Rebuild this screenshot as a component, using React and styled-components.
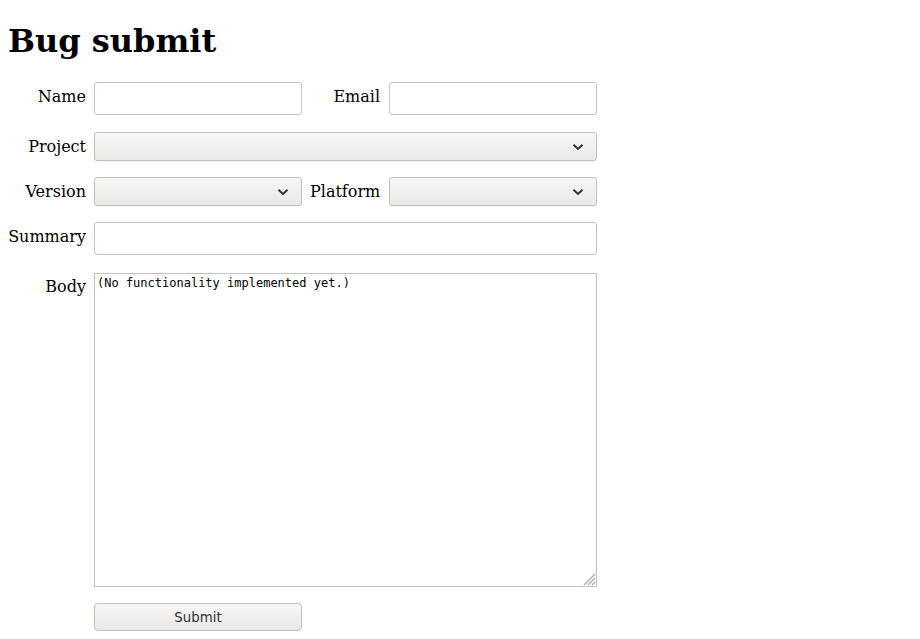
import React from 'react';
import styled, { createGlobalStyle } from 'styled-components';

const GlobalStyle = createGlobalStyle`
  html, body {
    margin: 0;
    background: #fff;
  }
  body {
    font-family: "DejaVu Serif", serif;
    color: #000;
  }
`;

const Page = styled.div`
  padding: 22px 8px 8px;
`;

const Title = styled.h1`
  margin: 0 0 22px;
  font-family: "DejaVu Serif", serif;
  font-size: 32px;
  font-weight: bold;
  line-height: 38px;
`;

const Form = styled.form`
  display: flex;
  flex-direction: column;
  width: 589px;
`;

const Row = styled.div`
  display: grid;
  grid-template-columns: ${(p) => (p.$split ? '78px 208px 71px 208px' : '78px 503px')};
  column-gap: 8px;
  align-items: center;
  margin-top: ${(p) => p.$top || 0}px;

  & > :nth-child(3) {
    padding-right: 1px;
  }
`;

const Label = styled.label`
  font-family: "DejaVu Serif", serif;
  font-size: 16px;
  text-align: right;
  white-space: nowrap;
  align-self: ${(p) => (p.$top ? 'start' : 'center')};
  padding-top: ${(p) => (p.$top ? 4 : 0)}px;
  margin-top: ${(p) => (p.$raise ? -4 : 0)}px;
`;

const TextInput = styled.input`
  box-sizing: border-box;
  height: 33px;
  width: 100%;
  margin: 0;
  padding: 4px 8px;
  border: 1px solid #c6c2bc;
  border-radius: 3px;
  background: #fff;
  font-family: "DejaVu Sans", sans-serif;
  font-size: 13px;
  outline: none;
`;

const SelectBox = styled.div`
  position: relative;
  box-sizing: border-box;
  height: 29px;
  border: 1px solid #c3bfb9;
  border-radius: 3px;
  background: linear-gradient(#f7f6f5, #ebe9e7);
  box-shadow: 0 1px 0 rgba(0, 0, 0, 0.04);

  svg {
    position: absolute;
    right: 12px;
    top: 10px;
  }
`;

const Select = ({ label }) => (
  <SelectBox aria-label={label} role="combobox">
    <svg width="12" height="8" viewBox="0 0 12 8">
      <path d="M1.5 1.8 L6 6 L10.5 1.8" fill="none" stroke="#2e3436" strokeWidth="2" />
    </svg>
  </SelectBox>
);

const AreaWrap = styled.div`
  position: relative;
  height: 314px;

  svg {
    position: absolute;
    right: 1px;
    bottom: 1px;
    pointer-events: none;
  }
`;

const TextArea = styled.textarea`
  box-sizing: border-box;
  display: block;
  height: 314px;
  width: 100%;
  margin: 0;
  padding: 2px;
  border: 1px solid #c0c0bc;
  border-radius: 0;
  background: #fff;
  font-family: "DejaVu Sans Mono", monospace;
  font-size: 12px;
  line-height: 14px;
  color: #000;
  resize: none;
  outline: none;
`;

const Button = styled.button`
  box-sizing: border-box;
  width: 208px;
  height: 28px;
  margin: 0;
  border: 1px solid #c3bfb9;
  border-radius: 4px;
  background: linear-gradient(#f7f6f5, #ebe9e7);
  font-family: "DejaVu Sans", sans-serif;
  font-size: 13.33px;
  color: #2e3436;
  cursor: pointer;
`;

export default function App() {
  return (
    <>
      <GlobalStyle />
      <Page>
        <Title>Bug submit</Title>
        <Form onSubmit={(e) => e.preventDefault()}>
          <Row $split>
            <Label $raise>Name</Label>
            <TextInput type="text" />
            <Label $raise>Email</Label>
            <TextInput type="email" />
          </Row>
          <Row $top={17}>
            <Label>Project</Label>
            <Select label="Project" />
          </Row>
          <Row $split $top={16}>
            <Label>Version</Label>
            <Select label="Version" />
            <Label>Platform</Label>
            <Select label="Platform" />
          </Row>
          <Row $top={16}>
            <Label $raise>Summary</Label>
            <TextInput type="text" />
          </Row>
          <Row $top={18}>
            <Label $top>Body</Label>
            <AreaWrap>
              <TextArea defaultValue="(No functionality implemented yet.)" />
              <svg width="14" height="14" viewBox="0 0 14 14">
                <path d="M13 2 L2 13 M13 6 L6 13 M13 10 L10 13" stroke="#a8a8a4" strokeWidth="1.2" />
              </svg>
            </AreaWrap>
          </Row>
          <Row $top={16}>
            <span />
            <div>
              <Button type="submit">Submit</Button>
            </div>
          </Row>
        </Form>
      </Page>
    </>
  );
}
